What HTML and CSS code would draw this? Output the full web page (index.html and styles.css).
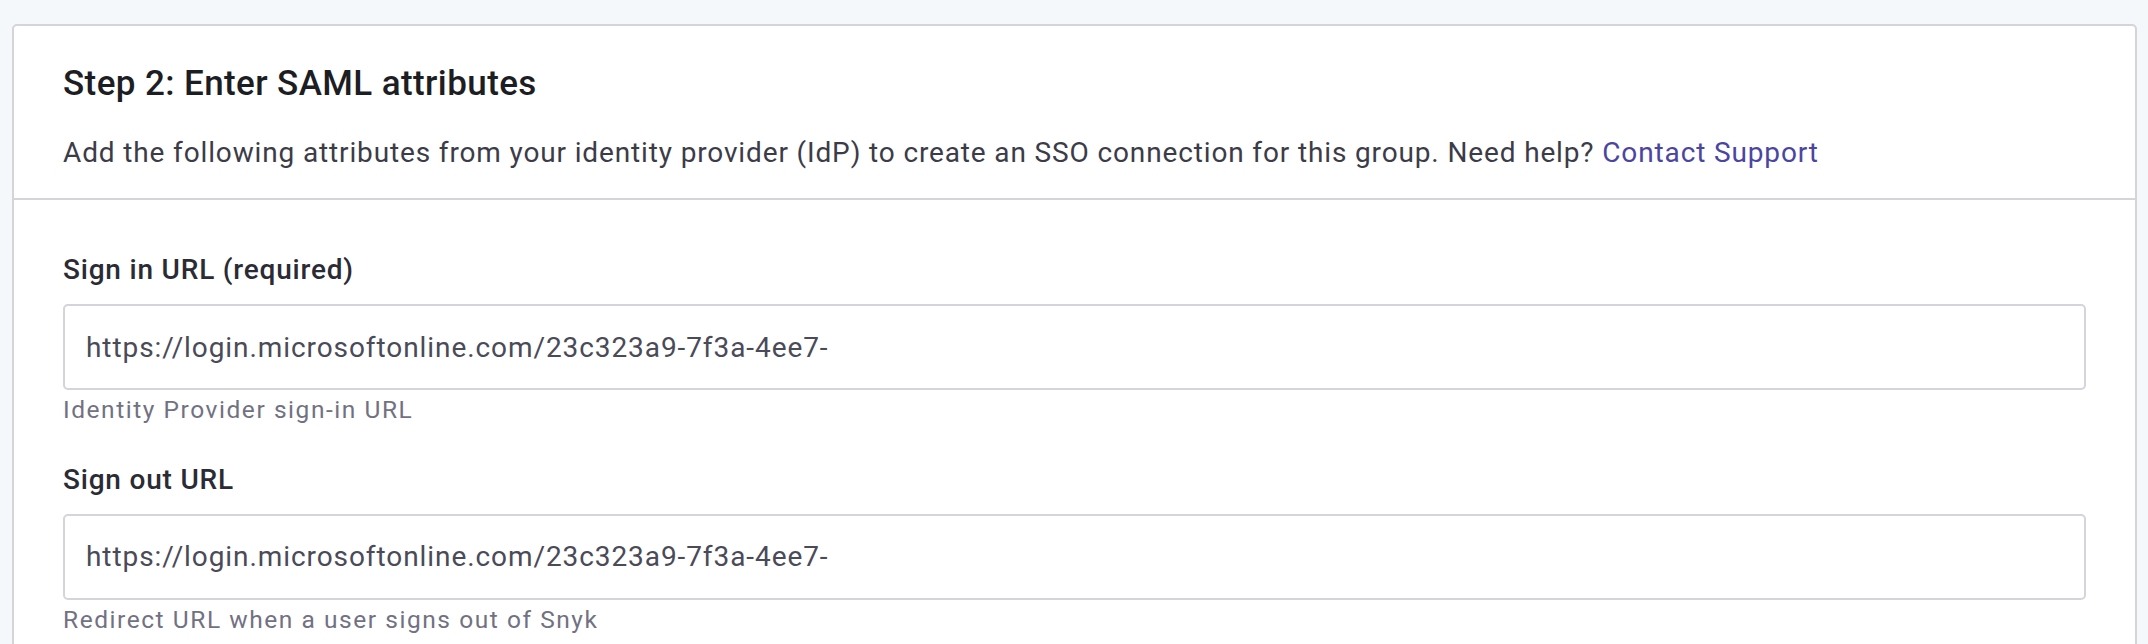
FILE: index.html
```html
<!DOCTYPE html>
<html lang="en">
<head>
<meta charset="utf-8">
<title>Step 2: Enter SAML attributes</title>
<link rel="stylesheet" href="styles.css">
</head>
<body>
  <section class="card">
    <header class="card-header">
      <h2 class="card-title">Step 2: Enter SAML attributes</h2>
      <p class="card-desc">Add the following attributes from your identity provider (IdP) to create an SSO connection for this group. Need help? <a class="link" href="#">Contact Support</a></p>
    </header>
    <div class="card-body">
      <div class="field">
        <label class="field-label" for="signin">Sign in URL (required)</label>
        <input class="field-input" id="signin" type="text" value="https://login.microsoftonline.com/23c323a9-7f3a-4ee7-">
        <div class="field-help">Identity Provider sign-in URL</div>
      </div>
      <div class="field">
        <label class="field-label" for="signout">Sign out URL</label>
        <input class="field-input" id="signout" type="text" value="https://login.microsoftonline.com/23c323a9-7f3a-4ee7-">
        <div class="field-help">Redirect URL when a user signs out of Snyk</div>
      </div>
    </div>
  </section>
</body>
</html>
```

FILE: styles.css
```css
* { box-sizing: border-box; }

html, body {
  margin: 0;
  padding: 0;
}

body {
  background: #f5f8fb;
  font-family: Roboto, "Liberation Sans", sans-serif;
  padding: 24px 11px 0 12px;
}

.card {
  background: #ffffff;
  border: 2px solid #d4d4da;
  border-radius: 5px;
}

.card-header {
  padding: 37px 49px 24px;
  border-bottom: 2px solid #d4d4da;
}

.card-title {
  margin: 0;
  font-size: 35px;
  line-height: 42px;
  font-weight: 500;
  letter-spacing: 0.4px;
  color: #1d1d24;
}

.card-desc {
  margin: 27px 0 0;
  font-size: 28px;
  line-height: 42px;
  letter-spacing: 0.86px;
  color: #3c3c48;
}

.link {
  color: #4b45a2;
  text-decoration: none;
}

.card-body {
  padding: 49px 49px 40px;
  display: flex;
  flex-direction: column;
  gap: 30px;
}

.field {
  display: flex;
  flex-direction: column;
}

.field-label {
  font-size: 28px;
  line-height: 42px;
  font-weight: 500;
  letter-spacing: 0.8px;
  color: #2b2b35;
  margin-bottom: 13px;
}

.field-input {
  display: block;
  width: 100%;
  height: 86px;
  margin: 0;
  padding: 0 21px;
  border: 2px solid #d4d4da;
  border-radius: 5px;
  background: #ffffff;
  font-family: Roboto, "Liberation Sans", sans-serif;
  font-size: 28px;
  line-height: 42px;
  letter-spacing: 0.92px;
  color: #4a4a58;
  outline: none;
}

.field-help {
  margin-top: 2px;
  font-size: 24.5px;
  line-height: 36.75px;
  letter-spacing: 1.55px;
  color: #727183;
}
```
